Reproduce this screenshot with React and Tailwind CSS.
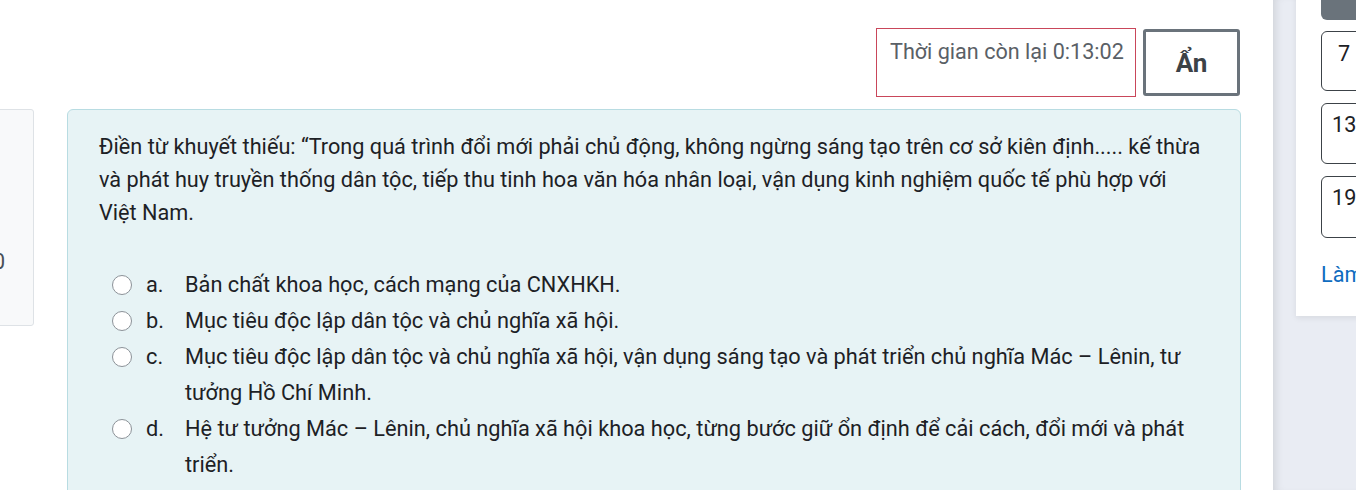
const options = [
  { letter: "a.", text: "Bản chất khoa học, cách mạng của CNXHKH." },
  { letter: "b.", text: "Mục tiêu độc lập dân tộc và chủ nghĩa xã hội." },
  {
    letter: "c.",
    text: "Mục tiêu độc lập dân tộc và chủ nghĩa xã hội, vận dụng sáng tạo và phát triển chủ nghĩa Mác – Lênin, tư tưởng Hồ Chí Minh.",
  },
  {
    letter: "d.",
    text: "Hệ tư tưởng Mác – Lênin, chủ nghĩa xã hội khoa học, từng bước giữ ổn định để cải cách, đổi mới và phát triển.",
  },
];

const App = () => {
  return (
    <div className="flex h-[490px] w-[1356px] overflow-hidden bg-white font-['Roboto','Liberation_Sans',sans-serif] text-[#1d2125]">
      <div className="w-[1273px] shrink-0">
        <div className="flex justify-end gap-[7px] pr-[33px] pt-[28px]">
          <div className="h-[69px] w-[260px] border border-[#c9465a] pl-[13px] pt-[8px] text-[21.6px] leading-[30px] text-[#5a6066]">
            Thời gian còn lại 0:13:02
          </div>
          <button className="mt-px h-[67px] w-[97px] rounded-[3px] border-[3px] border-[#6a737b] pt-[2px] text-[26px] font-bold text-[#3c4247]">
            Ẩn
          </button>
        </div>

        <div className="mt-[12px] flex gap-[33px]">
          <div className="-ml-[26px] h-[217px] w-[60px] shrink-0 rounded-[3px] border border-[#dee2e6] bg-[#f8f9fa] pt-[139px]">
            <span className="ml-[18px] block text-[21.6px] leading-[25px] text-[#495057]">0</span>
          </div>

          <div className="h-[420px] w-[1174px] shrink-0 rounded-[6px] border border-[#b8dce2] bg-[#e7f3f5] pl-[31px] pr-[37px] pt-[20px]">
            <p className="text-[21.7px] leading-[33px]">
              Điền từ khuyết thiếu: “Trong quá trình đổi mới phải chủ động, không ngừng sáng tạo trên cơ sở kiên định..... kế thừa và phát huy truyền thống dân tộc, tiếp thu tinh hoa văn hóa nhân loại, vận dụng kinh nghiệm quốc tế phù hợp với Việt Nam.
            </p>

            <div className="mt-[38px] pl-[13px]">
              {options.map((opt) => (
                <div key={opt.letter} className="flex text-[21.75px] leading-[36px]">
                  <span className="mt-[8px] h-[20px] w-[20px] shrink-0 rounded-full border-[1.5px] border-[#8c9298] bg-white" />
                  <span className="ml-[14px] w-[39px] shrink-0">{opt.letter}</span>
                  <span>{opt.text}</span>
                </div>
              ))}
            </div>
          </div>
        </div>
      </div>

      <div className="relative flex-1 bg-[#e9ecf3] pl-[23px] shadow-[inset_8px_0_10px_-6px_rgba(0,0,0,0.12)]">
        <div className="h-[326px] bg-white pl-[25px] shadow-[0_2px_6px_rgba(0,0,0,0.08)]">
          <div className="-mt-[10px] h-[30px] w-[60px] rounded-[6px] bg-[#6a737b]" />
          <div className="mt-[11px] flex flex-col gap-[12px]">
            <div className="h-[60px] w-[60px] rounded-[6px] border border-[#3c4247] pl-[16px] pt-[8px] text-[21.6px] leading-[28px]">7</div>
            <div className="h-[61px] w-[60px] rounded-[6px] border border-[#3c4247] pl-[10px] pt-[7px] text-[21.6px] leading-[28px]">13</div>
            <div className="h-[62px] w-[60px] rounded-[6px] border border-[#3c4247] pl-[10px] pt-[7px] text-[21.6px] leading-[28px]">19</div>
          </div>
          <div className="mt-[23px] text-[21.6px] leading-[28px] text-[#0f6cbf] whitespace-nowrap">Làm lại</div>
        </div>
      </div>
    </div>
  );
};

export default App;
